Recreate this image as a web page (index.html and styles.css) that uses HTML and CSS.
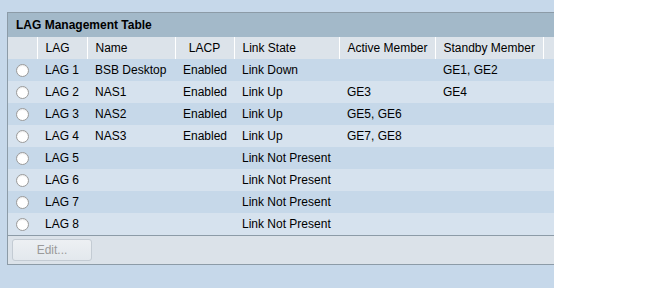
FILE: index.html
```html
<!DOCTYPE html>
<html>
<head>
<meta charset="utf-8">
<link rel="stylesheet" href="styles.css">
</head>
<body>
<div class="frame">
  <div class="panel">
    <div class="title">LAG Management Table</div>
    <table class="grid">
      <colgroup>
        <col class="c-sel"><col class="c-lag"><col class="c-name"><col class="c-lacp"><col class="c-state"><col class="c-active"><col class="c-standby"><col>
      </colgroup>
      <thead>
        <tr><th></th><th>LAG</th><th>Name</th><th class="center">LACP</th><th>Link State</th><th>Active Member</th><th>Standby Member</th><th></th></tr>
      </thead>
      <tbody>
        <tr><td><span class="radio"></span></td><td>LAG 1</td><td>BSB Desktop</td><td>Enabled</td><td>Link Down</td><td></td><td>GE1, GE2</td><td></td></tr>
        <tr><td><span class="radio"></span></td><td>LAG 2</td><td>NAS1</td><td>Enabled</td><td>Link Up</td><td>GE3</td><td>GE4</td><td></td></tr>
        <tr><td><span class="radio"></span></td><td>LAG 3</td><td>NAS2</td><td>Enabled</td><td>Link Up</td><td>GE5, GE6</td><td></td><td></td></tr>
        <tr><td><span class="radio"></span></td><td>LAG 4</td><td>NAS3</td><td>Enabled</td><td>Link Up</td><td>GE7, GE8</td><td></td><td></td></tr>
        <tr><td><span class="radio"></span></td><td>LAG 5</td><td></td><td></td><td>Link Not Present</td><td></td><td></td><td></td></tr>
        <tr><td><span class="radio"></span></td><td>LAG 6</td><td></td><td></td><td>Link Not Present</td><td></td><td></td><td></td></tr>
        <tr><td><span class="radio"></span></td><td>LAG 7</td><td></td><td></td><td>Link Not Present</td><td></td><td></td><td></td></tr>
        <tr><td><span class="radio"></span></td><td>LAG 8</td><td></td><td></td><td>Link Not Present</td><td></td><td></td><td></td></tr>
      </tbody>
    </table>
    <div class="footer"><button class="btn" disabled>Edit...</button></div>
  </div>
</div>
</body>
</html>
```

FILE: styles.css
```css
html, body {
  margin: 0;
  padding: 0;
  background: #ffffff;
}
.frame {
  width: 554px;
  height: 288px;
  background: #c6d8ea;
  overflow: hidden;
  padding: 12px 0 0 7px;
  box-sizing: border-box;
  font-family: "Liberation Sans", Arial, sans-serif;
  font-size: 12px;
  color: #000;
}
.panel {
  width: 580px;
  border: 1px solid #8c9ba7;
  background: #dbe2e9;
}
.title {
  height: 24px;
  line-height: 24px;
  padding-left: 8px;
  background: #a3b9c9;
  font-weight: bold;
  font-size: 12px;
}
.grid {
  border-collapse: collapse;
  table-layout: fixed;
  width: 100%;
}
.c-sel { width: 29px; }
.c-lag { width: 50px; }
.c-name { width: 88px; }
.c-lacp { width: 59px; }
.c-state { width: 105px; }
.c-active { width: 96px; }
.c-standby { width: 108px; }
.grid th {
  height: 22px;
  padding: 0 0 0 8px;
  background: #dce3ea;
  font-weight: normal;
  text-align: left;
  border-left: 1px solid #ffffff;
  white-space: nowrap;
}
.grid th:first-child { border-left: none; }
.grid th.center { text-align: center; padding: 0; }
.grid td {
  height: 22px;
  padding: 0 0 0 8px;
  white-space: nowrap;
}
.grid td:first-child { padding: 0; text-align: center; }
.grid tbody tr:nth-child(odd) { background: #c6d8e9; }
.grid tbody tr:nth-child(even) { background: #d6e2ee; }
.radio {
  display: inline-block;
  width: 11px;
  height: 11px;
  border: 1px solid #9a9a9a;
  border-radius: 50%;
  background: #ffffff;
  vertical-align: middle;
  box-shadow: inset 0 1px 1px rgba(0,0,0,0.08);
}
.footer {
  border-top: 1px solid #8c9ba7;
  height: 29px;
  padding: 3px 0 0 4px;
  box-sizing: border-box;
}
.btn {
  width: 80px;
  height: 22px;
  border: 1px solid #c3cbd3;
  border-radius: 3px;
  background: linear-gradient(#edf0f3, #e3e8ed);
  color: #9a9a9a;
  font-family: "Liberation Sans", Arial, sans-serif;
  font-size: 12px;
  padding: 0;
}
```
